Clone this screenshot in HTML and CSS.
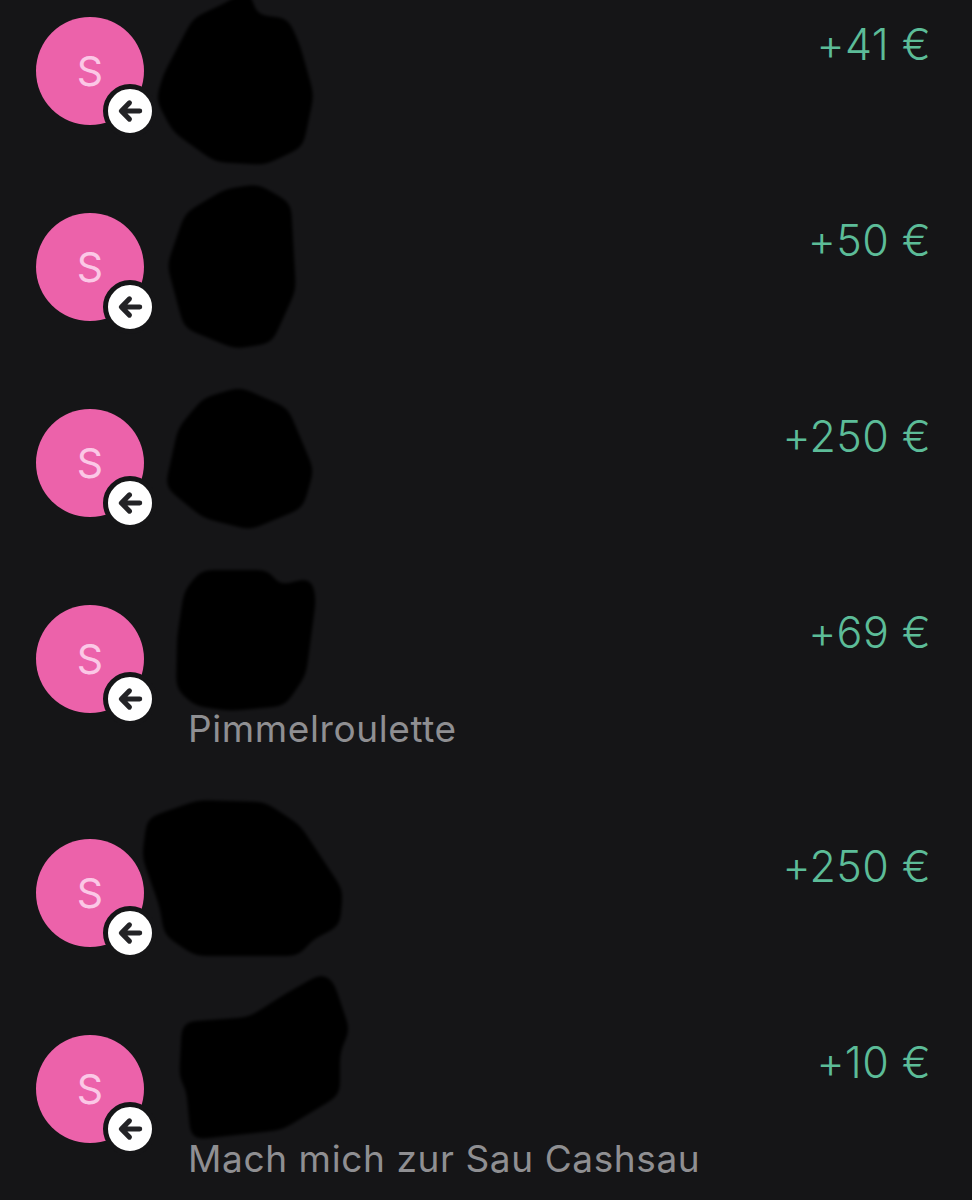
FILE: index.html
```html
<!DOCTYPE html>
<html lang="de">
<head>
<meta charset="utf-8">
<title>Transaktionen</title>
<link rel="stylesheet" href="styles.css">
</head>
<body>
<main class="feed">
  <div class="row">
    <div class="avatar"><span class="initial">S</span><span class="badge"><svg class="arrow" viewBox="0 0 24 24"><path d="M21 12H5M11.500 4.500 4 12l7.500 7.500"/></svg></span></div>
    <div class="body"><div class="line"><span class="amount">+41 €</span></div></div>
  </div>
  <div class="row">
    <div class="avatar"><span class="initial">S</span><span class="badge"><svg class="arrow" viewBox="0 0 24 24"><path d="M21 12H5M11.500 4.500 4 12l7.500 7.500"/></svg></span></div>
    <div class="body"><div class="line"><span class="amount">+50 €</span></div></div>
  </div>
  <div class="row">
    <div class="avatar"><span class="initial">S</span><span class="badge"><svg class="arrow" viewBox="0 0 24 24"><path d="M21 12H5M11.500 4.500 4 12l7.500 7.500"/></svg></span></div>
    <div class="body"><div class="line"><span class="amount">+250 €</span></div></div>
  </div>
  <div class="row row-note">
    <div class="avatar"><span class="initial">S</span><span class="badge"><svg class="arrow" viewBox="0 0 24 24"><path d="M21 12H5M11.500 4.500 4 12l7.500 7.500"/></svg></span></div>
    <div class="body"><div class="line"><span class="amount">+69 €</span></div><p class="note">Pimmelroulette</p></div>
  </div>
  <div class="row">
    <div class="avatar"><span class="initial">S</span><span class="badge"><svg class="arrow" viewBox="0 0 24 24"><path d="M21 12H5M11.500 4.500 4 12l7.500 7.500"/></svg></span></div>
    <div class="body"><div class="line"><span class="amount">+250 €</span></div></div>
  </div>
  <div class="row row-last">
    <div class="avatar"><span class="initial">S</span><span class="badge"><svg class="arrow" viewBox="0 0 24 24"><path d="M21 12H5M11.500 4.500 4 12l7.500 7.500"/></svg></span></div>
    <div class="body"><div class="line"><span class="amount">+10 €</span></div><p class="note">Mach mich zur Sau Cashsau</p></div>
  </div>
  <svg class="redactions" viewBox="0 0 972 1200" aria-hidden="true">
    <defs>
      <filter id="soft" x="-15%" y="-15%" width="130%" height="130%">
        <feGaussianBlur stdDeviation="7"/>
        <feComponentTransfer><feFuncA type="linear" slope="8" intercept="-3.500"/></feComponentTransfer>
        <feGaussianBlur stdDeviation="1.800"/>
      </filter>
    </defs>
    <g class="marks" filter="url(#soft)">
      <path d="M250-12 256 15 288 18 300 45 314 95 303 147 265 165 215 162 173 132 156 100 163 75 193 18 225 3Z"/>
      <path d="M258 184 291 203 296 290 272 343 235 349 184 328 167 265 185 213 225 189Z"/>
      <path d="M240 387 288 408 314 470 303 508 250 530 203 518 165 487 178 428 203 398Z"/>
      <path d="M201 570 270 570 278 586 312 577 316 600 306 675 285 706 230 711 195 706 176 689 177 637 184 591Z"/>
      <path d="M198 800 265 802 300 825 343 890 340 926 312 940 299 956 195 956 164 935 160 908 142 857 147 818Z"/>
      <path d="M322 973 333 980 350 1030 340 1052 340 1095 282 1130 191 1140 186 1088 179 1079 182 1022 249 1017 285 994Z"/>
    </g>
  </svg>
</main>
</body>
</html>
```
FILE: styles.css
```css
* {
  box-sizing: border-box;
}

html,
body {
  margin: 0;
  height: 100%;
  background: #151517;
}

body {
  font-family: Inter, "Noto Sans", sans-serif;
  overflow: hidden;
}

.feed {
  position: relative;
  height: 1200px;
  padding: 17px 41px 0 36px;
  overflow: hidden;
}

.row {
  display: flex;
  gap: 44px;
  height: 196px;
}

.row-note {
  height: 234px;
}

.row-last {
  height: auto;
}

.avatar {
  position: relative;
  flex: none;
  display: flex;
  align-items: center;
  justify-content: center;
  width: 108px;
  height: 108px;
  border-radius: 50%;
  background: #ec62aa;
}

.initial {
  color: #fbc8e6;
  font-size: 41px;
  font-weight: 400;
  line-height: 1;
}

.badge {
  position: absolute;
  right: -13px;
  bottom: -13px;
  display: flex;
  align-items: center;
  justify-content: center;
  width: 54px;
  height: 54px;
  border: 5px solid #151517;
  border-radius: 50%;
  background: #fff;
}

.arrow {
  width: 26px;
  height: 26px;
  fill: none;
  stroke: #232326;
  stroke-width: 4.600;
  stroke-linecap: round;
  stroke-linejoin: round;
}

.body {
  flex: 1;
  min-width: 0;
}

.line {
  display: flex;
  justify-content: flex-end;
}

.amount {
  margin-top: 1px;
  color: #5cbc98;
  font-size: 43px;
  font-weight: 350;
  letter-spacing: 0.4px;
  line-height: 52px;
}

.note {
  margin: 49px 0 0;
  color: #8f8f92;
  font-size: 37px;
  font-weight: 400;
  letter-spacing: 0.6px;
  line-height: 44px;
}

.redactions {
  position: absolute;
  inset: 0;
  width: 972px;
  height: 1200px;
  pointer-events: none;
}

.marks {
  fill: #000;
}
```
